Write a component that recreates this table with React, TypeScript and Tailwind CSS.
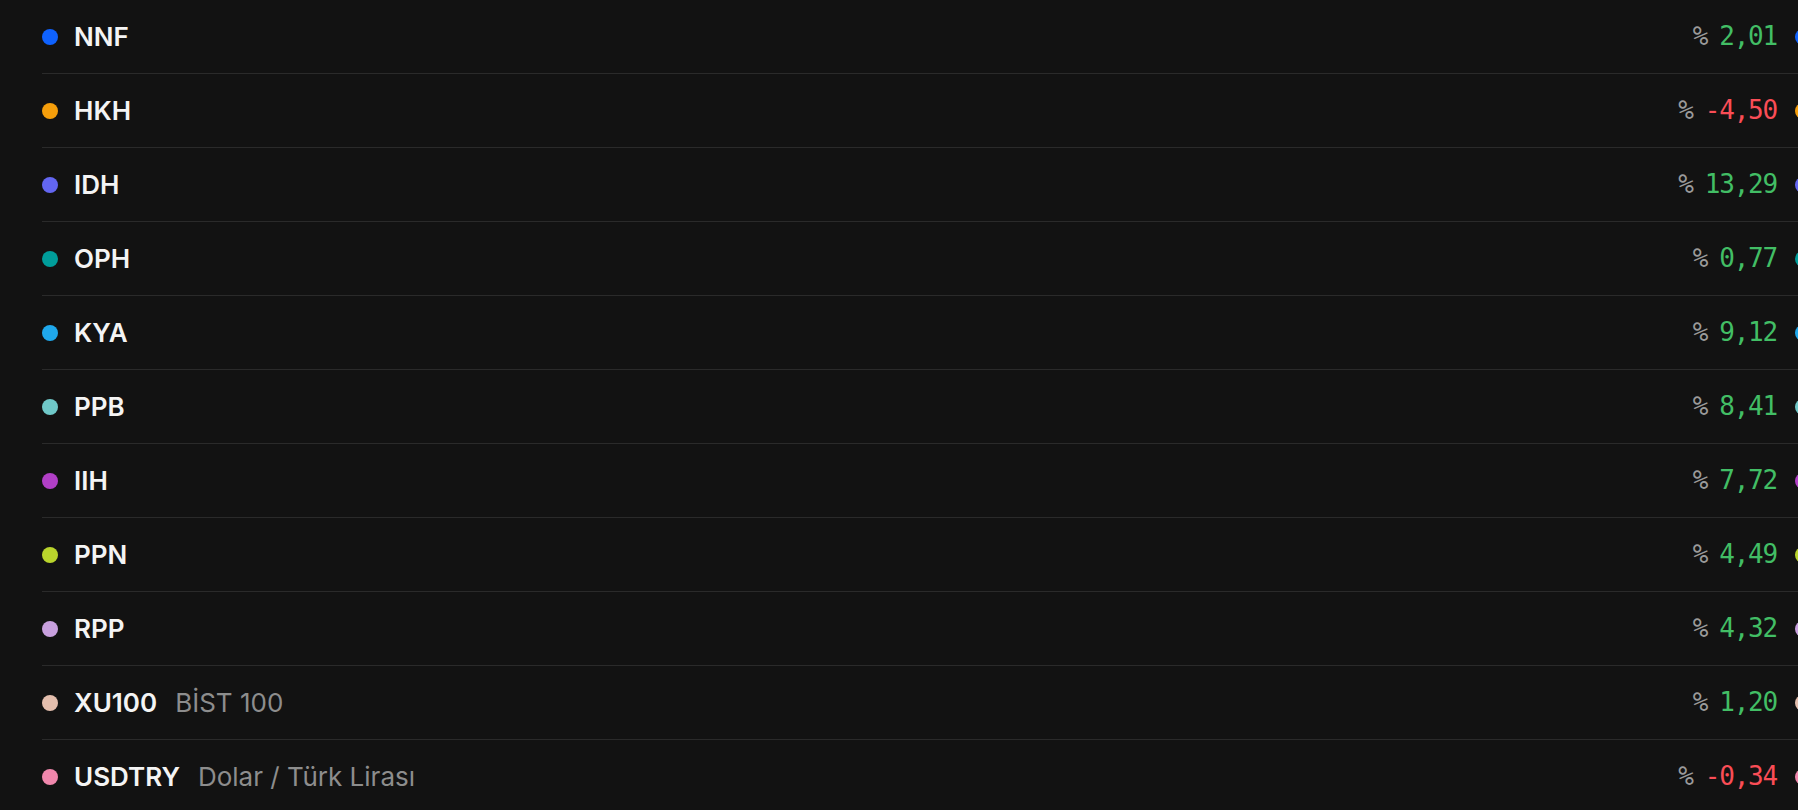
const rows = [
  { code: "NNF", dot: "bg-[#0f62fe]", value: "2,01", up: true },
  { code: "HKH", dot: "bg-[#f59e0b]", value: "-4,50", up: false },
  { code: "IDH", dot: "bg-[#6366f1]", value: "13,29", up: true },
  { code: "OPH", dot: "bg-[#009d9a]", value: "0,77", up: true },
  { code: "KYA", dot: "bg-[#1fa8ec]", value: "9,12", up: true },
  { code: "PPB", dot: "bg-[#6fc8c8]", value: "8,41", up: true },
  { code: "IIH", dot: "bg-[#b13fc6]", value: "7,72", up: true },
  { code: "PPN", dot: "bg-[#b9d42c]", value: "4,49", up: true },
  { code: "RPP", dot: "bg-[#c8a0de]", value: "4,32", up: true },
  { code: "XU100", name: "BİST 100", dot: "bg-[#e3bead]", value: "1,20", up: true },
  { code: "USDTRY", name: "Dolar / Türk Lirası", dot: "bg-[#f087ac]", value: "-0,34", up: false },
]

type Row = (typeof rows)[number]

function TickerRow({ row }: { row: Row }) {
  return (
    <div className="flex h-[74px] shrink-0 items-center border-b border-[#2a2a2a] pr-[18px]">
      <span className={`h-4 w-4 shrink-0 rounded-full ${row.dot}`} />
      <span className="ml-4 text-[26px] font-semibold text-[#f4f4f4]">{row.code}</span>
      {row.name && (
        <span className="ml-[18px] text-[26px] font-normal text-[#8d8d8d]">{row.name}</span>
      )}
      <div className="ml-auto flex items-center font-['DejaVu_Sans_Mono',monospace] text-[26px] tracking-[-1.2px]">
        <span className="text-[#9a9a9a]">%</span>
        <span className={`ml-[12px] ${row.up ? "text-[#42be65]" : "text-[#fa4d56]"}`}>{row.value}</span>
      </div>
    </div>
  )
}

// next page of the ticker, only its left edge shows
function PeekRow({ row }: { row: Row }) {
  return (
    <div className="flex h-[74px] shrink-0 items-center border-b border-[#2a2a2a]">
      <span className={`h-4 w-4 shrink-0 rounded-full ${row.dot}`} />
    </div>
  )
}

export default function App() {
  return (
    <div className="h-[810px] w-[1798px] overflow-hidden bg-[#121212] font-['Inter',sans-serif]">
      <div className="ml-[42px] flex">
        <div className="flex w-[1753px] shrink-0 flex-col">
          {rows.map((r) => (
            <TickerRow key={r.code} row={r} />
          ))}
        </div>
        <div className="flex w-[40px] shrink-0 flex-col">
          {rows.map((r) => (
            <PeekRow key={r.code} row={r} />
          ))}
        </div>
      </div>
    </div>
  )
}
